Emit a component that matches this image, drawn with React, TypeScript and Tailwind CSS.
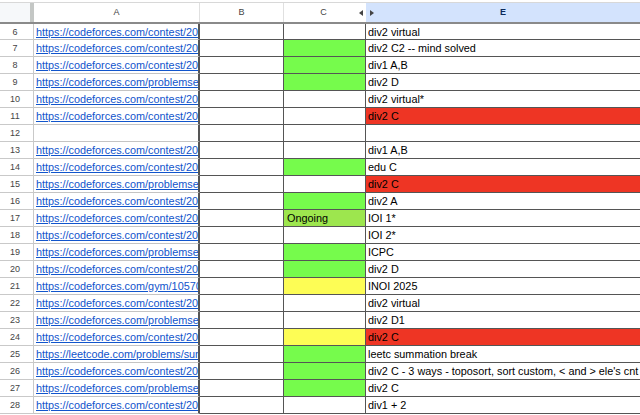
const rows: { n: number; url: string; c?: string; note?: string; e?: string; red?: boolean }[] = [
  { n: 6, url: 'https://codeforces.com/contest/2053/problem/C', e: 'div2 virtual' },
  { n: 7, url: 'https://codeforces.com/contest/2061/problem/C', c: 'green', e: 'div2 C2 -- mind solved' },
  { n: 8, url: 'https://codeforces.com/contest/2046/problem/A', c: 'green', e: 'div1 A,B' },
  { n: 9, url: 'https://codeforces.com/problemset/problem/2', c: 'green', e: 'div2 D' },
  { n: 10, url: 'https://codeforces.com/contest/2025/problem/C', e: 'div2 virtual*' },
  { n: 11, url: 'https://codeforces.com/contest/2027/problem/C', e: 'div2 C', red: true },
  { n: 12, url: '' },
  { n: 13, url: 'https://codeforces.com/contest/2061/problem/A', e: 'div1 A,B' },
  { n: 14, url: 'https://codeforces.com/contest/2042/problem/C', c: 'green', e: 'edu C' },
  { n: 15, url: 'https://codeforces.com/problemset/problem/2', e: 'div2 C', red: true },
  { n: 16, url: 'https://codeforces.com/contest/2055/problem/A', c: 'green', e: 'div2 A' },
  { n: 17, url: 'https://codeforces.com/contest/2077/problem/A', c: 'ongoing', note: 'Ongoing', e: 'IOI 1*' },
  { n: 18, url: 'https://codeforces.com/contest/2084/problem/A', e: 'IOI 2*' },
  { n: 19, url: 'https://codeforces.com/problemset/problem/2', c: 'green', e: 'ICPC' },
  { n: 20, url: 'https://codeforces.com/contest/2071/problem/D', c: 'green', e: 'div2 D' },
  { n: 21, url: 'https://codeforces.com/gym/105700/problem/A', c: 'yellow', e: 'INOI 2025' },
  { n: 22, url: 'https://codeforces.com/contest/2059/problem/C', e: 'div2 virtual' },
  { n: 23, url: 'https://codeforces.com/problemset/problem/2', e: 'div2 D1' },
  { n: 24, url: 'https://codeforces.com/contest/2040/problem/C', c: 'yellow', e: 'div2 C', red: true },
  { n: 25, url: 'https://leetcode.com/problems/summation-break', c: 'green', e: 'leetc summation break' },
  { n: 26, url: 'https://codeforces.com/contest/2057/problem/C', c: 'green', e: "div2 C - 3 ways - toposort, sort custom, < and > ele's cnt" },
  { n: 27, url: 'https://codeforces.com/problemset/problem/2', c: 'green', e: 'div2 C' },
  { n: 28, url: 'https://codeforces.com/contest/2062/problem/A', e: 'div1 + 2' },
];

export default function App() {
  return (
    <div className="w-[640px] h-[415px] overflow-hidden bg-white font-['Liberation_Sans',Arial,sans-serif] text-[10.85px] text-black">
      <div className="h-[3px] border-b border-[#d8d8d8]" />
      <div className="flex h-[20.5px] border-b-2 border-[#8a8a8a] text-[9px] text-[#444]">
        <div className="w-[34px] shrink-0 bg-[#f6f8fa] border-r-[4px] border-[#c4c7c5]" />
        <div className="w-[166px] shrink-0 flex items-center justify-center border-r border-[#e0e0e0]">A</div>
        <div className="w-[84px] shrink-0 flex items-center justify-center border-r border-[#e0e0e0]">B</div>
        <div className="w-[82px] shrink-0 flex items-center justify-between pr-[3px] relative">
          <span className="w-full text-center">C</span>
          <svg width="4" height="6" viewBox="0 0 4 6" className="absolute right-[3px] top-[7px]"><path d="M4 0v6L0 3z" fill="#444" /></svg>
        </div>
        <div className="flex-1 flex items-center justify-center bg-[#d3e3fd] font-bold text-[#0b2a5b] relative">
          <svg width="4" height="6" viewBox="0 0 4 6" className="absolute left-[4px] top-[7px]"><path d="M0 0v6l4-3z" fill="#444" /></svg>
          E
        </div>
      </div>
      {rows.map((r) => (
        <div key={r.n} className="flex h-[16.98px] leading-[17px]">
          <div className="w-[34px] shrink-0 bg-white border-r-[1px] border-b border-[#c9c9c9] text-center text-[9px] leading-[16px] text-[#444] pr-[3px]">{r.n}</div>
          <div className="w-[166px] shrink-0 overflow-hidden whitespace-nowrap border-b border-r-2 border-b-[#c4c4c4] border-r-[#555] pl-[2px] text-[#1155cc] underline">{r.url}</div>
          <div className="w-[84px] shrink-0 border-b border-r border-[#555]" />
          <div
            className={
              r.c === 'green'
                ? 'w-[82px] shrink-0 border-b border-r border-[#555] bg-[#76fb4c] pl-[3px]'
                : r.c === 'yellow'
                  ? 'w-[82px] shrink-0 border-b border-r border-[#555] bg-[#fdfd55] pl-[3px]'
                  : r.c === 'ongoing'
                    ? 'w-[82px] shrink-0 border-b border-r border-[#555] bg-[#9de64e] pl-[3px]'
                    : 'w-[82px] shrink-0 border-b border-r border-[#555] pl-[3px]'
            }
          >
            {r.note}
          </div>
          <div className={r.red ? 'flex-1 whitespace-nowrap border-b border-[#555] bg-[#ee3524] pl-[2px]' : 'flex-1 whitespace-nowrap border-b border-[#555] pl-[2px]'}>{r.e}</div>
        </div>
      ))}
    </div>
  );
}
